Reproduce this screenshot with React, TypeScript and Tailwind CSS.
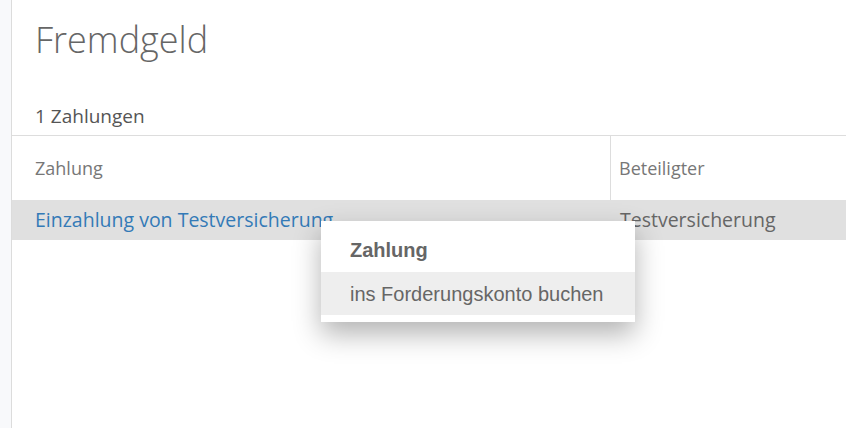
export default function App() {
  return (
    <div className="relative flex h-[428px] w-[846px] overflow-hidden bg-white font-['Open_Sans',sans-serif]">
      <div className="w-[12px] shrink-0 border-r border-[#dcdcdc] bg-[#f8f9fb]" />
      <div className="flex-1">
        <h1 className="px-[23px] pt-[16px] text-[36px] font-light leading-[48px] text-[#666]">Fremdgeld</h1>
        <p className="mt-[39px] px-[23px] text-[19px] leading-[26px] text-[#555]">1 Zahlungen</p>
        <div className="mt-[6px] border-t border-[#ddd]">
          <div className="flex h-[64px] text-[18px] text-[#777]">
            <div className="flex w-[599px] items-center border-r border-[#ddd] px-[23px]">Zahlung</div>
            <div className="flex items-center px-[8px]">Beteiligter</div>
          </div>
          <div className="flex h-[40px] items-center bg-[#e0e0e0] text-[19.5px]">
            <div className="w-[600px] px-[23px] text-[#337ab7]">Einzahlung von Testversicherung</div>
            <div className="px-[8px] text-[#666]">Testversicherung</div>
          </div>
        </div>
      </div>

      {/* Kontextmenü */}
      <div className="absolute left-[321px] top-[221px] w-[314px] bg-white pb-[7px] font-['Liberation_Sans',Arial,sans-serif] shadow-[0_12px_26px_rgba(0,0,0,0.3)]">
        <div className="flex h-[51px] items-center px-[29px] pt-[6px] text-[20px] font-bold text-[#666]">Zahlung</div>
        <div className="flex h-[43px] items-center bg-[#eee] px-[29px] text-[20px] text-[#666]">ins Forderungskonto buchen</div>
      </div>
    </div>
  );
}
